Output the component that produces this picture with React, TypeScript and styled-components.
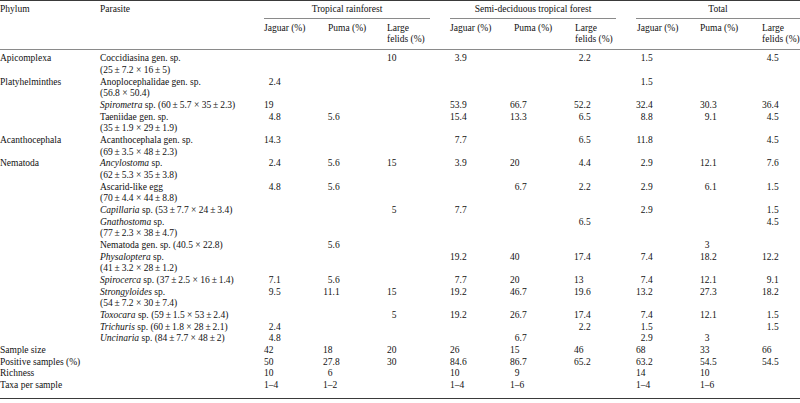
import React from "react";
import styled, { createGlobalStyle } from "styled-components";

const Global = createGlobalStyle`
  body {
    margin: 0;
    background: #fff;
  }
`;

const Table = styled.table`
  width: 800px;
  table-layout: fixed;
  border-collapse: collapse;
  font-family: "Liberation Serif", "Times New Roman", serif;
  font-size: 9.5px;
  line-height: 11.65px;
  color: #111;
  border-top: 1.5px solid #3a3a3a;
  border-bottom: 1.5px solid #3a3a3a;
`;

const Head = styled.thead`
  border-bottom: 1px solid #8a8a8a;
`;

const Th = styled.th<{ $shift?: number }>`
  font-weight: normal;
  text-align: left;
  vertical-align: top;
  padding: 0 0 0 ${(p) => p.$shift || 0}px;
  white-space: nowrap;
`;

const GroupTh = styled.th<{ $last?: boolean }>`
  font-weight: normal;
  vertical-align: top;
  padding: 0 ${(p) => (p.$last ? 0 : 20)}px 0 0;
`;

const GroupTitle = styled.div`
  text-align: center;
  padding-bottom: 3px;
  border-bottom: 0.8px solid #8a8a8a;
`;

const FirstHeadRow = styled.tr`
  th {
    padding-top: 2.5px;
  }
`;

const SubHeadRow = styled.tr`
  th {
    padding-top: 3.5px;
    padding-bottom: 3px;
  }
`;

const Row = styled.tr<{ $first?: boolean; $last?: boolean }>`
  td {
    padding-top: ${(p) => (p.$first ? 3.5 : 0)}px;
    padding-bottom: ${(p) => (p.$last ? 6.5 : 0)}px;
  }
`;

const Td = styled.td`
  padding: 0;
  vertical-align: top;
  white-space: nowrap;
`;

const IntPart = styled.span`
  display: inline-block;
  width: 1em;
  text-align: right;
`;

const Genus = styled.i`
  font-style: italic;
`;

type Entry = {
  phylum?: string;
  name: string;
  italic?: boolean;
  suffix: string;
  size: string;
  wrap?: boolean;
  vals: string[];
};

const entries: Entry[] = [
  { phylum: "Apicomplexa", name: "Coccidiasina", suffix: " gen. sp.", size: "(25\u2009±\u20097.2 × 16\u2009±\u20095)", wrap: true, vals: ["", "", "10", "3.9", "", "2.2", "1.5", "", "4.5"] },
  { phylum: "Platyhelminthes", name: "Anoplocephalidae", suffix: " gen. sp.", size: "(56.8 × 50.4)", wrap: true, vals: ["2.4", "", "", "", "", "", "1.5", "", ""] },
  { name: "Spirometra", italic: true, suffix: " sp.", size: "(60\u2009±\u20095.7 × 35\u2009±\u20092.3)", vals: ["19", "", "", "53.9", "66.7", "52.2", "32.4", "30.3", "36.4"] },
  { name: "Taeniidae", suffix: " gen. sp.", size: "(35\u2009±\u20091.9 × 29\u2009±\u20091.9)", wrap: true, vals: ["4.8", "5.6", "", "15.4", "13.3", "6.5", "8.8", "9.1", "4.5"] },
  { phylum: "Acanthocephala", name: "Acanthocephala", suffix: " gen. sp.", size: "(69\u2009±\u20093.5 × 48\u2009±\u20092.3)", wrap: true, vals: ["14.3", "", "", "7.7", "", "6.5", "11.8", "", "4.5"] },
  { phylum: "Nematoda", name: "Ancylostoma", italic: true, suffix: " sp.", size: "(62\u2009±\u20095.3 × 35\u2009±\u20093.8)", wrap: true, vals: ["2.4", "5.6", "15", "3.9", "20", "4.4", "2.9", "12.1", "7.6"] },
  { name: "Ascarid-like egg", suffix: "", size: "(70\u2009±\u20094.4 × 44\u2009±\u20098.8)", wrap: true, vals: ["4.8", "5.6", "", "", "6.7", "2.2", "2.9", "6.1", "1.5"] },
  { name: "Capillaria", italic: true, suffix: " sp.", size: "(53\u2009±\u20097.7 × 24\u2009±\u20093.4)", vals: ["", "", "5", "7.7", "", "", "2.9", "", "1.5"] },
  { name: "Gnathostoma", italic: true, suffix: " sp.", size: "(77\u2009±\u20092.3 × 38\u2009±\u20094.7)", wrap: true, vals: ["", "", "", "", "", "6.5", "", "", "4.5"] },
  { name: "Nematoda", suffix: " gen. sp.", size: "(40.5 × 22.8)", vals: ["", "5.6", "", "", "", "", "", "3", ""] },
  { name: "Physaloptera", italic: true, suffix: " sp.", size: "(41\u2009±\u20093.2 × 28\u2009±\u20091.2)", wrap: true, vals: ["", "", "", "19.2", "40", "17.4", "7.4", "18.2", "12.2"] },
  { name: "Spirocerca", italic: true, suffix: " sp.", size: "(37\u2009±\u20092.5 × 16\u2009±\u20091.4)", vals: ["7.1", "5.6", "", "7.7", "20", "13", "7.4", "12.1", "9.1"] },
  { name: "Strongyloides", italic: true, suffix: " sp.", size: "(54\u2009±\u20097.2 × 30\u2009±\u20097.4)", wrap: true, vals: ["9.5", "11.1", "15", "19.2", "46.7", "19.6", "13.2", "27.3", "18.2"] },
  { name: "Toxocara", italic: true, suffix: " sp.", size: "(59\u2009±\u20091.5 × 53\u2009±\u20092.4)", vals: ["", "", "5", "19.2", "26.7", "17.4", "7.4", "12.1", "1.5"] },
  { name: "Trichuris", italic: true, suffix: " sp.", size: "(60\u2009±\u20091.8 × 28\u2009±\u20092.1)", vals: ["2.4", "", "", "", "", "2.2", "1.5", "", "1.5"] },
  { name: "Uncinaria", italic: true, suffix: " sp.", size: "(84\u2009±\u20097.7 × 48\u2009±\u20092)", vals: ["4.8", "", "", "", "6.7", "", "2.9", "3", ""] },
];

const totals: { label: string; vals: string[] }[] = [
  { label: "Sample size", vals: ["42", "18", "20", "26", "15", "46", "68", "33", "66"] },
  { label: "Positive samples (%)", vals: ["50", "27.8", "30", "84.6", "86.7", "65.2", "63.2", "54.5", "54.5"] },
  { label: "Richness", vals: ["10", "6", "", "10", "9", "", "14", "10", ""] },
  { label: "Taxa per sample", vals: ["1–4", "1–2", "", "1–4", "1–6", "", "1–4", "1–6", ""] },
];

const widths = [100, 164, 59, 64, 63, 60, 64, 62, 64, 62, 38];

const groups = ["Tropical rainforest", "Semi-deciduous tropical forest", "Total"];
const subShift = [0, 5, 0, 0, 4, -1, 1, 0, 0];

function Num({ v }: { v: string }) {
  const m = v.match(/^(\d+)(\.\d+)?$/);
  if (!m) return <>{v}</>;
  return (
    <>
      <IntPart>{m[1]}</IntPart>
      {m[2]}
    </>
  );
}

export default function App() {
  return (
    <>
      <Global />
      <Table>
        <colgroup>
          {widths.map((w, i) => (
            <col key={i} style={{ width: w }} />
          ))}
        </colgroup>
        <Head>
          <FirstHeadRow>
            <Th rowSpan={2}>Phylum</Th>
            <Th rowSpan={2}>Parasite</Th>
            {groups.map((g, i) => (
              <GroupTh key={g} colSpan={3} $last={i === 2}>
                <GroupTitle>{g}</GroupTitle>
              </GroupTh>
            ))}
          </FirstHeadRow>
          <SubHeadRow>
            {subShift.map((s, i) => (
              <Th key={i} $shift={s}>
                {i % 3 === 0 ? "Jaguar (%)" : i % 3 === 1 ? "Puma (%)" : (
                  <>
                    Large
                    <br />
                    felids (%)
                  </>
                )}
              </Th>
            ))}
          </SubHeadRow>
        </Head>
        <tbody>
          {entries.map((e, r) => (
            <Row key={r} $first={r === 0}>
              <Td>{e.phylum}</Td>
              <Td>
                {e.italic ? <Genus>{e.name}</Genus> : e.name}
                {e.suffix}
                {e.wrap ? <br /> : " "}
                {e.size}
              </Td>
              {e.vals.map((v, i) => (
                <Td key={i}>
                  <Num v={v} />
                </Td>
              ))}
            </Row>
          ))}
          {totals.map((t, r) => (
            <Row key={t.label} $last={r === totals.length - 1}>
              <Td colSpan={2}>{t.label}</Td>
              {t.vals.map((v, i) => (
                <Td key={i}>
                  <Num v={v} />
                </Td>
              ))}
            </Row>
          ))}
        </tbody>
      </Table>
    </>
  );
}
